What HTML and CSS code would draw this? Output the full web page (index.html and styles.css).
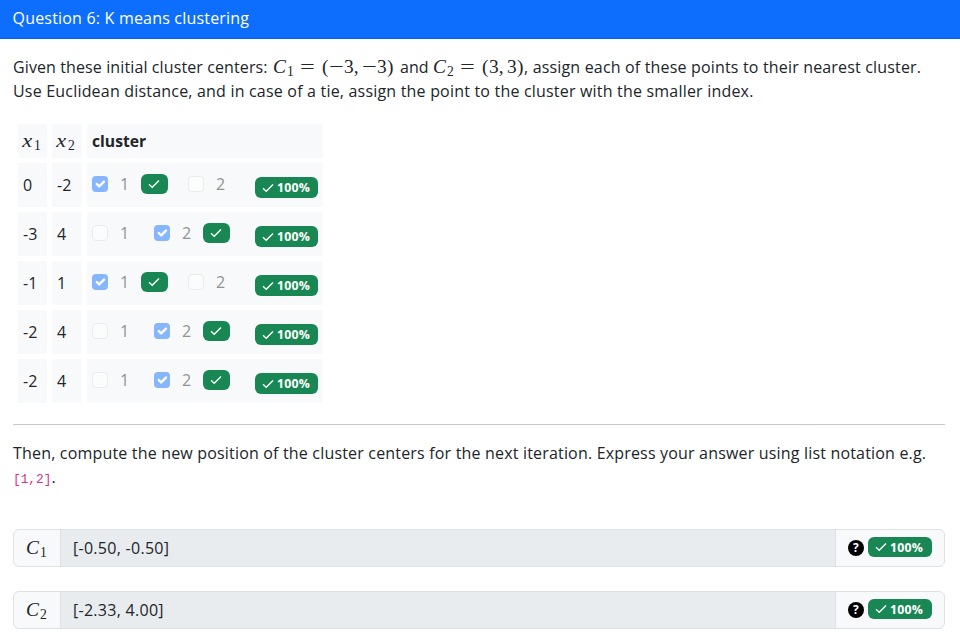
FILE: index.html
```html
<!DOCTYPE html>
<html lang="en">
<head>
<meta charset="utf-8">
<title>Question 6</title>
<link rel="stylesheet" href="styles.css">
</head>
<body>
<svg class="defs" width="0" height="0">
  <symbol id="tick" viewBox="0 0 12 10"><path d="M1 5.2 4.2 8.3 11 1.5" fill="none" stroke="#fff" stroke-width="1.3"/></symbol>
  <symbol id="boxtick" viewBox="0 0 20 20"><path d="m6 10 3 3 6-6" fill="none" stroke="#fff" stroke-width="3" stroke-linecap="round" stroke-linejoin="round"/></symbol>
</svg>
<header class="header"><span class="t-head">Question 6: K means clustering</span></header>
<main class="body">
  <div class="line line-first">
    <span class="seg seg-given">Given these initial cluster centers:</span>
    <span class="math m-c"><i>C</i><sub>1</sub></span><span class="math m-eq"><b>=</b></span><span class="math m-par">(</span><span class="math m-minus"><b>−</b></span><span class="math m-num">3,</span><span class="math m-minus"><b>−</b></span><span class="math m-num3">3</span><span class="math m-close">)</span>
    <span class="seg seg-and">and</span>
    <span class="math m-c"><i>C</i><sub>2</sub></span><span class="math m-eq"><b>=</b></span><span class="math m-par">(</span><span class="math m-num2">3,</span><span class="math m-num3">3</span><span class="math m-close2">)</span>
    <span class="seg seg-assign">, assign each of these points to their nearest cluster.</span>
  </div>
  <div class="line t-two">Use Euclidean distance, and in case of a tie, assign the point to the cluster with the smaller index.</div>

  <div class="table">
    <div class="cell th"><span class="math"><i>x</i><sub>1</sub></span></div><div class="cell th"><span class="math"><i>x</i><sub>2</sub></span></div><div class="cell th"><strong>cluster</strong></div>

    <div class="cell">0</div><div class="cell">-2</div>
    <div class="cell opts"><span class="box on"><svg><use href="#boxtick"/></svg></span><span class="num">1</span><span class="ok"><svg><use href="#tick"/></svg></span><span class="box second"></span><span class="num">2</span><span class="badge"><svg><use href="#tick"/></svg>100%</span></div>

    <div class="cell">-3</div><div class="cell">4</div>
    <div class="cell opts"><span class="box"></span><span class="num">1</span><span class="box on second"><svg><use href="#boxtick"/></svg></span><span class="num">2</span><span class="ok"><svg><use href="#tick"/></svg></span><span class="badge"><svg><use href="#tick"/></svg>100%</span></div>

    <div class="cell">-1</div><div class="cell">1</div>
    <div class="cell opts"><span class="box on"><svg><use href="#boxtick"/></svg></span><span class="num">1</span><span class="ok"><svg><use href="#tick"/></svg></span><span class="box second"></span><span class="num">2</span><span class="badge"><svg><use href="#tick"/></svg>100%</span></div>

    <div class="cell">-2</div><div class="cell">4</div>
    <div class="cell opts"><span class="box"></span><span class="num">1</span><span class="box on second"><svg><use href="#boxtick"/></svg></span><span class="num">2</span><span class="ok"><svg><use href="#tick"/></svg></span><span class="badge"><svg><use href="#tick"/></svg>100%</span></div>

    <div class="cell">-2</div><div class="cell">4</div>
    <div class="cell opts"><span class="box"></span><span class="num">1</span><span class="box on second"><svg><use href="#boxtick"/></svg></span><span class="num">2</span><span class="ok"><svg><use href="#tick"/></svg></span><span class="badge"><svg><use href="#tick"/></svg>100%</span></div>
  </div>

  <hr>
  <div class="line t-then">Then, compute the new position of the cluster centers for the next iteration. Express your answer using list notation e.g.</div>
  <div class="line"><code>[1,2]</code>.</div>

  <div class="group">
    <div class="prefix"><span class="math"><i>C</i><sub>1</sub></span></div>
    <div class="input">[-0.50, -0.50]</div>
    <div class="suffix"><span class="help">?</span><span class="badge"><svg><use href="#tick"/></svg>100%</span></div>
  </div>
  <div class="group">
    <div class="prefix"><span class="math"><i>C</i><sub>2</sub></span></div>
    <div class="input">[-2.33, 4.00]</div>
    <div class="suffix"><span class="help">?</span><span class="badge"><svg><use href="#tick"/></svg>100%</span></div>
  </div>
</main>
</body>
</html>
```
FILE: styles.css
```css
* { box-sizing: border-box; }
body {
  margin: 0;
  height: 640px;
  overflow: hidden;
  background: #fff;
  color: #212529;
  font: 16px/24px "Open Sans", "Noto Sans", sans-serif;
  letter-spacing: 0.195px;
}
.defs { display: block; }
.header {
  height: 39px;
  padding: 6px 12.5px;
  background: #0d6efd;
  border-bottom: 1px solid #0b5fd9;
  color: #fff;
  white-space: nowrap;
}
.body { padding: 16px 15px 0 13px; }
.line { height: 24px; white-space: nowrap; }
.line-first { display: flex; }
.seg { flex: none; }
.seg-given { width: 260px; letter-spacing: 0.11px; }
.seg-and { width: 33px; letter-spacing: 0; }
.seg-assign { letter-spacing: 0.17px; }
.t-then { letter-spacing: 0.18px; }
.math {
  flex: none;
  font-family: "Liberation Serif", serif;
  font-size: 19.4px;
  letter-spacing: 0;
  white-space: nowrap;
}
.math sub { font-size: 13.6px; line-height: 0; vertical-align: -3px; margin-left: 1px; }
.math b { display: inline-block; font-weight: 400; transform: scaleX(1.35); transform-origin: 0 50%; }
.m-c { width: 27px; }
.m-eq { width: 22px; }
.m-par { width: 7px; }
.m-minus { width: 15px; }
.m-num { width: 18px; }
.m-num2 { width: 18px; }
.m-num3 { width: 10px; }
.m-close { width: 13px; }
.m-close2 { width: 7px; }

.table {
  display: grid;
  grid-template-columns: 29px 30px 236px;
  grid-template-rows: 34px repeat(5, 44px);
  gap: 5px;
  margin: 21px 0 0 5px;
}
.cell { display: flex; align-items: center; padding: 0 5px; background: #f8f9fa; white-space: nowrap; }
.th strong { font-size: 15.7px; letter-spacing: 0; }
.th .math i { display: inline-block; transform: scaleX(1.15); margin-right: 1.5px; }
.box {
  flex: none;
  width: 16px;
  height: 16px;
  margin-top: -3px;
  border: 1px solid #eaebed;
  border-radius: 4px;
  background: #fbfcfc;
}
.box svg { display: block; width: 16px; height: 16px; }
.box.on { border: 0; background: #86b6fe; }
.box.second { margin-left: 21px; }
.num { width: 12px; margin: -3px 0 0 12px; color: #909294; }
.num + .ok { margin-left: 9px; }
.ok {
  display: flex;
  align-items: center;
  justify-content: center;
  width: 26.5px;
  height: 20px;
  margin-top: -3px;
  border-radius: 6px;
  background: #198754;
}
.ok + .box.second { margin-left: 20.5px; }
.num + .box.second { margin-left: 22px; }
.ok svg, .badge svg { width: 12px; height: 10px; }
.badge {
  display: flex;
  align-items: center;
  flex: none;
  width: 63px;
  height: 21px;
  padding-left: 7px;
  border-radius: 6px;
  background: #198754;
  color: #fff;
  font-size: 12.3px;
  font-weight: 700;
  line-height: 21px;
}
.badge svg { margin-right: 3px; }
.opts .badge { margin: 5px 0 0 auto; }

hr { margin: 21px 0 16px; border: 0; border-top: 1px solid #c8c9ca; width: 932px; }
code { color: #d63384; font-family: "Liberation Mono", monospace; font-size: 12.8px; letter-spacing: 0; }

.group {
  display: flex;
  width: 932px;
  height: 38px;
  margin-top: 24px;
  border: 1px solid #dee2e6;
  border-radius: 6px;
  background: #f8f9fa;
  overflow: hidden;
}
.line + .group { margin-top: 40px; }
.prefix { width: 47px; padding: 6px 0 0 12px; border-right: 1px solid #dee2e6; }
.input { flex: 1; padding: 6px 12px; background: #e9ecef; letter-spacing: 0.28px; }
.suffix { display: flex; width: 109px; padding: 7px 12px 0 12px; border-left: 1px solid #dee2e6; }
.suffix .badge { width: 64px; height: 20px; margin-left: 4px; }
.help {
  width: 16px;
  height: 16px;
  margin-top: 3px;
  border-radius: 50%;
  background: #000;
  color: #fff;
  font-size: 12px;
  font-weight: 700;
  line-height: 16px;
  text-align: center;
}
```
